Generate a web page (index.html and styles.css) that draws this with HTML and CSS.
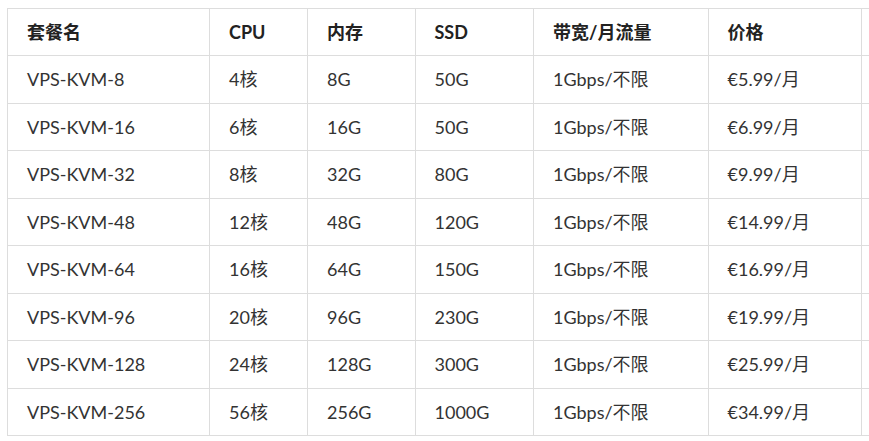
FILE: index.html
```html
<!DOCTYPE html>
<html lang="zh-CN">
<head>
<meta charset="utf-8">
<title>VPS-KVM</title>
<link rel="stylesheet" href="styles.css">
</head>
<body>
<table class="plans">
  <colgroup>
    <col class="c1"><col class="c2"><col class="c3"><col class="c4"><col class="c5"><col class="c6"><col class="c7">
  </colgroup>
  <thead>
    <tr><th>套餐名</th><th>CPU</th><th>内存</th><th>SSD</th><th>带宽/月流量</th><th>价格</th><th></th></tr>
  </thead>
  <tbody>
    <tr><td>VPS-KVM-8</td><td>4核</td><td>8G</td><td>50G</td><td>1Gbps/不限</td><td>€5.99/月</td><td></td></tr>
    <tr><td>VPS-KVM-16</td><td>6核</td><td>16G</td><td>50G</td><td>1Gbps/不限</td><td>€6.99/月</td><td></td></tr>
    <tr><td>VPS-KVM-32</td><td>8核</td><td>32G</td><td>80G</td><td>1Gbps/不限</td><td>€9.99/月</td><td></td></tr>
    <tr><td>VPS-KVM-48</td><td>12核</td><td>48G</td><td>120G</td><td>1Gbps/不限</td><td>€14.99/月</td><td></td></tr>
    <tr><td>VPS-KVM-64</td><td>16核</td><td>64G</td><td>150G</td><td>1Gbps/不限</td><td>€16.99/月</td><td></td></tr>
    <tr><td>VPS-KVM-96</td><td>20核</td><td>96G</td><td>230G</td><td>1Gbps/不限</td><td>€19.99/月</td><td></td></tr>
    <tr><td>VPS-KVM-128</td><td>24核</td><td>128G</td><td>300G</td><td>1Gbps/不限</td><td>€25.99/月</td><td></td></tr>
    <tr><td>VPS-KVM-256</td><td>56核</td><td>256G</td><td>1000G</td><td>1Gbps/不限</td><td>€34.99/月</td><td></td></tr>
  </tbody>
</table>
</body>
</html>
```
FILE: styles.css
```css
html, body {
  margin: 0;
  padding: 0;
  background: #fff;
  overflow: hidden;
}
body {
  padding: 8px 0 0 7px;
  font-family: "Lato", "Noto Sans CJK SC", sans-serif;
  font-size: 18px;
  color: #333;
}
.plans {
  border-collapse: collapse;
  table-layout: fixed;
  width: 1000px;
}
.c1 { width: 202px; }
.c2 { width: 98px; }
.c3 { width: 107.5px; }
.c4 { width: 118.5px; }
.c5 { width: 174.5px; }
.c6 { width: 153.5px; }
.c7 { width: 146px; }
.plans th,
.plans td {
  border: 1px solid #ddd;
  padding: 10px 19px;
  line-height: 26.44px;
  text-align: left;
  white-space: nowrap;
}
.plans th {
  font-weight: 700;
  color: #222;
}
```
